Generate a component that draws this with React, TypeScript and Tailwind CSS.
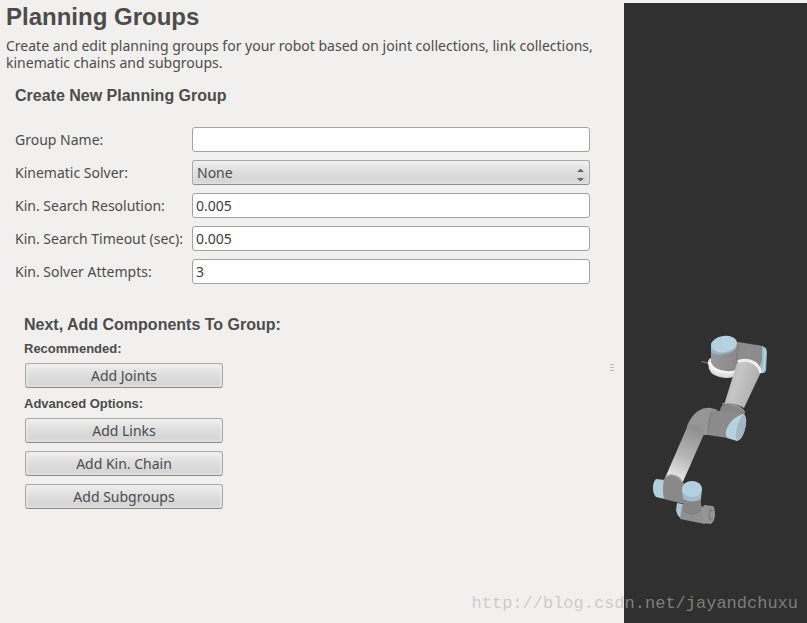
import { useState } from 'react'
import clsx from 'clsx'

interface Field {
  id: string
  label: string
  kind: 'text' | 'select'
}

const fields: Field[] = [
  { id: 'groupName', label: 'Group Name:', kind: 'text' },
  { id: 'solver', label: 'Kinematic Solver:', kind: 'select' },
  { id: 'resolution', label: 'Kin. Search Resolution:', kind: 'text' },
  { id: 'timeout', label: 'Kin. Search Timeout (sec):', kind: 'text' },
  { id: 'attempts', label: 'Kin. Solver Attempts:', kind: 'text' },
]

const heading = 'font-["Liberation_Sans",sans-serif] font-bold'
const raised =
  'border border-[#a9a9a7] border-b-[#8b8b89] rounded-[3px] bg-linear-to-b from-[#efefef] via-[#dddddd] to-[#d2d2d2] shadow-[inset_0_0_4px_#f2f2f2]'

function GroupButton({ children }: { children: string }) {
  return (
    <button type="button" className={clsx(raised, 'block w-full h-[25px] leading-6 text-center')}>
      {children}
    </button>
  )
}

function RobotView() {
  return (
    <svg
      viewBox="624 3 183 620"
      preserveAspectRatio="xMidYMin meet"
      className="block w-full"
      role="img"
      aria-label="Robot model"
    >
      <defs>
        <linearGradient id="upper" x1="0" y1="0" x2="1" y2="0.35">
          <stop offset="0" stopColor="#b0b0b0" />
          <stop offset="0.45" stopColor="#c6c6c6" />
          <stop offset="1" stopColor="#adadad" />
        </linearGradient>
        <linearGradient id="fore" x1="0.6" y1="0" x2="0.3" y2="1">
          <stop offset="0" stopColor="#8f8f8f" />
          <stop offset="0.5" stopColor="#b5b5b5" />
          <stop offset="1" stopColor="#f0f0f0" />
        </linearGradient>
        <linearGradient id="joint" x1="0" y1="0" x2="1" y2="0">
          <stop offset="0" stopColor="#999999" />
          <stop offset="1" stopColor="#878787" />
        </linearGradient>
      </defs>

      {/* base */}
      <path d="M701 361l6 1 3 3-4-2-5-1z" fill="#7d7d7d" />
      <path d="M711 358q-3 1-3 4l1 7q3 8 17 9 8 0 12-4l2-12z" fill="#e2e2e2" />
      <path d="M709 362q4 10 18 10 7 0 11-4" fill="none" stroke="#f4f4f4" strokeWidth="3" />
      <path d="M711 372q5 5 15 5 7 0 11-3" fill="none" stroke="#c4c4c4" strokeWidth="1" strokeDasharray="2 1" />
      <path d="M711 349l26-6 3 24q-5 5-14 4-12-1-15-9z" fill="url(#joint)" />

      {/* shoulder */}
      <path d="M736 343l2-1 25 4 1 22-4 6-22-12-3-8z" fill="#8c8c8c" />
      <path d="M739 344q-4 8-2 18" fill="none" stroke="#7c7c7c" strokeWidth="1" />
      <path d="M762 346l4 2 1 4-1 19-2 2h-4q-1-4 2-14z" fill="#a3b8c3" />
      <path d="M764 348l2 3-1 19-3 2q2-11 2-24z" fill="#b3d1e0" />
      <path d="M711 343v9q5 4 13 2 9-1 12-6v-6z" fill="#9fb6c2" />
      <ellipse cx="724" cy="344" rx="13" ry="8" fill="#b6d2e1" transform="rotate(-8 724 344)" />

      {/* upper arm */}
      <path d="M737 363q4-4 12-2 10 3 12 11l-17 36q-10-6-20-3z" fill="url(#upper)" />
      <path d="M738 362q4-3 12-1 9 3 11 12" fill="none" stroke="#eeeeee" strokeWidth="3" />

      {/* elbow */}
      <path d="M720 411q1-8 8-8 9 0 15 6 3 3 1 8l-9 9z" fill="#858585" />
      <path d="M722 404q4-2 12 1 8 3 11 7" fill="none" stroke="#b8b8b8" strokeWidth="1" strokeDasharray="2 1" />
      <path d="M712 410l31 4-15 24-20-3-8-2z" fill="#8b8b8b" />
      <path d="M687 426q4-10 11-15 6-4 13-3l7 2-6 2q-4 10-4 23l-7 0-13-4z" fill="#969696" />
      <path d="M713 410q-5 9-5 24" fill="none" stroke="#7a7a7a" strokeWidth="1" />
      <path d="M743 414q4 2 3 9-2 16-9 18l-10-3q-3-5 1-12 5-9 15-12z" fill="#b6d1df" />
      <path d="M743 415q4 2 3 9-2 13-8 16-3-1-2-8 2-12 7-17z" fill="#9fb8c4" />

      {/* forearm */}
      <path d="M688 425q6-1 10 1 5 3 6 8l-22 50-17-6z" fill="url(#fore)" />

      {/* wrist */}
      <path d="M656 479l9 1v19l-9-2q-3-3-3-9t3-9z" fill="#b2cfdd" />
      <path d="M664 479q4-5 10-4 6 1 9 7l3 9v12l-6 0-16-4q-2-10 0-20z" fill="#898989" />
      <path d="M666 476q5-3 10 0 4 2 6 6" fill="none" stroke="#b0b0b0" strokeWidth="1" />
      <path d="M677 503l6 1v14l-4-1q-2-2-3-7z" fill="#aac8d7" />
      <path d="M682 505l4-2 19 4v17l-25-5q1-7 2-14z" fill="#919191" />
      <path d="M683 497h18v12q-7 7-18 1z" fill="#858585" />
      <path d="M683 510q8 8 18 0" fill="none" stroke="#787878" strokeWidth="1" />
      <path d="M682 489h20l-1 10q-8 5-18 0z" fill="#a0bccb" />
      <ellipse cx="692" cy="489" rx="10" ry="8" fill="#b5d1e0" />
      <path d="M704 505l9 1q2 2 2 8 0 7-4 10l-9-1q-2-10 2-18z" fill="#949494" />
      <path d="M711 508q-3 7-1 13M714 510l-4 1M713 518l-3 1" fill="none" stroke="#7a7a7a" strokeWidth="1" />
    </svg>
  )
}

export default function App() {
  const [values, setValues] = useState<Record<string, string>>({
    groupName: '',
    solver: 'None',
    resolution: '0.005',
    timeout: '0.005',
    attempts: '3',
  })

  const update = (id: string, value: string) => setValues({ ...values, [id]: value })

  return (
    <div className='relative grid grid-cols-[624fr_183fr] min-h-screen overflow-hidden bg-[#f1f0ee] text-[#4c4c4c] text-[14px] leading-[17px] font-["Noto_Sans",sans-serif]'>
      <div className="flex min-w-0">
        <main className="flex-1 min-w-0 pl-[6px]">
          <h1 className={clsx(heading, 'text-[24px] leading-[34px]')}>Planning Groups</h1>
          <p className="mt-[3px]">
            Create and edit planning groups for your robot based on joint collections, link collections,
            kinematic chains and subgroups.
          </p>

          <form className="pl-[9px] pr-[18px] pt-[15px]" onSubmit={(e) => e.preventDefault()}>
            <h2 className={clsx(heading, 'text-[16px] leading-5')}>Create New Planning Group</h2>

            <div className="mt-[21px] grid grid-cols-[177px_1fr] gap-y-2 items-center">
              {fields.map((field) => (
                <div key={field.id} className="contents">
                  <label htmlFor={field.id} className="whitespace-nowrap">{field.label}</label>
                  {field.kind === 'select' ? (
                    <div className="relative">
                      <select
                        id={field.id}
                        value={values[field.id]}
                        onChange={(e) => update(field.id, e.target.value)}
                        className={clsx(raised, 'block w-full h-[25px] px-1 appearance-none')}
                      >
                        <option>None</option>
                      </select>
                      <svg
                        viewBox="0 0 7 13"
                        className="absolute right-[6px] top-[8px] w-[7px] h-[13px] pointer-events-none"
                        fill="#666666"
                      >
                        <path d="M0 4l3-3h1l3 3zM0 10h7l-3 3h-1z" />
                      </svg>
                    </div>
                  ) : (
                    <input
                      id={field.id}
                      type="text"
                      value={values[field.id]}
                      onChange={(e) => update(field.id, e.target.value)}
                      className="block w-full h-[25px] px-[3px] bg-white border border-[#a3a3a0] rounded-[3px] text-[#3c3c3c]"
                    />
                  )}
                </div>
              ))}
            </div>

            <section className="mt-[31px] ml-[9px]">
              <h2 className={clsx(heading, 'text-[16px] leading-5')}>Next, Add Components To Group:</h2>
              <div className="w-[200px]">
                <h3 className={clsx(heading, 'mt-1 text-[13px] leading-5')}>Recommended:</h3>
                <div className="mt-1 px-px">
                  <GroupButton>Add Joints</GroupButton>
                </div>
                <h3 className={clsx(heading, 'mt-[6px] text-[13px] leading-5')}>Advanced Options:</h3>
                <div className="mt-1 px-px flex flex-col gap-2">
                  <GroupButton>Add Links</GroupButton>
                  <GroupButton>Add Kin. Chain</GroupButton>
                  <GroupButton>Add Subgroups</GroupButton>
                </div>
              </div>
            </section>
          </form>
        </main>

        {/* Splitter handle */}
        <div className="w-4 flex flex-col items-center justify-center gap-[2px] pt-[112px] pr-2">
          <span className="w-1 h-px bg-[#bdbdbb]" />
          <span className="w-1 h-px bg-[#bdbdbb]" />
          <span className="w-1 h-px bg-[#bdbdbb]" />
        </div>
      </div>

      <aside className="mt-[3px] bg-[#303030]">
        <RobotView />
      </aside>

      <span className='absolute right-[9px] bottom-[7px] text-[17px] leading-6 text-[#b4b4aa]/60 pointer-events-none font-["Liberation_Mono",monospace]'>
        http://blog.csdn.net/jayandchuxu
      </span>
    </div>
  )
}
